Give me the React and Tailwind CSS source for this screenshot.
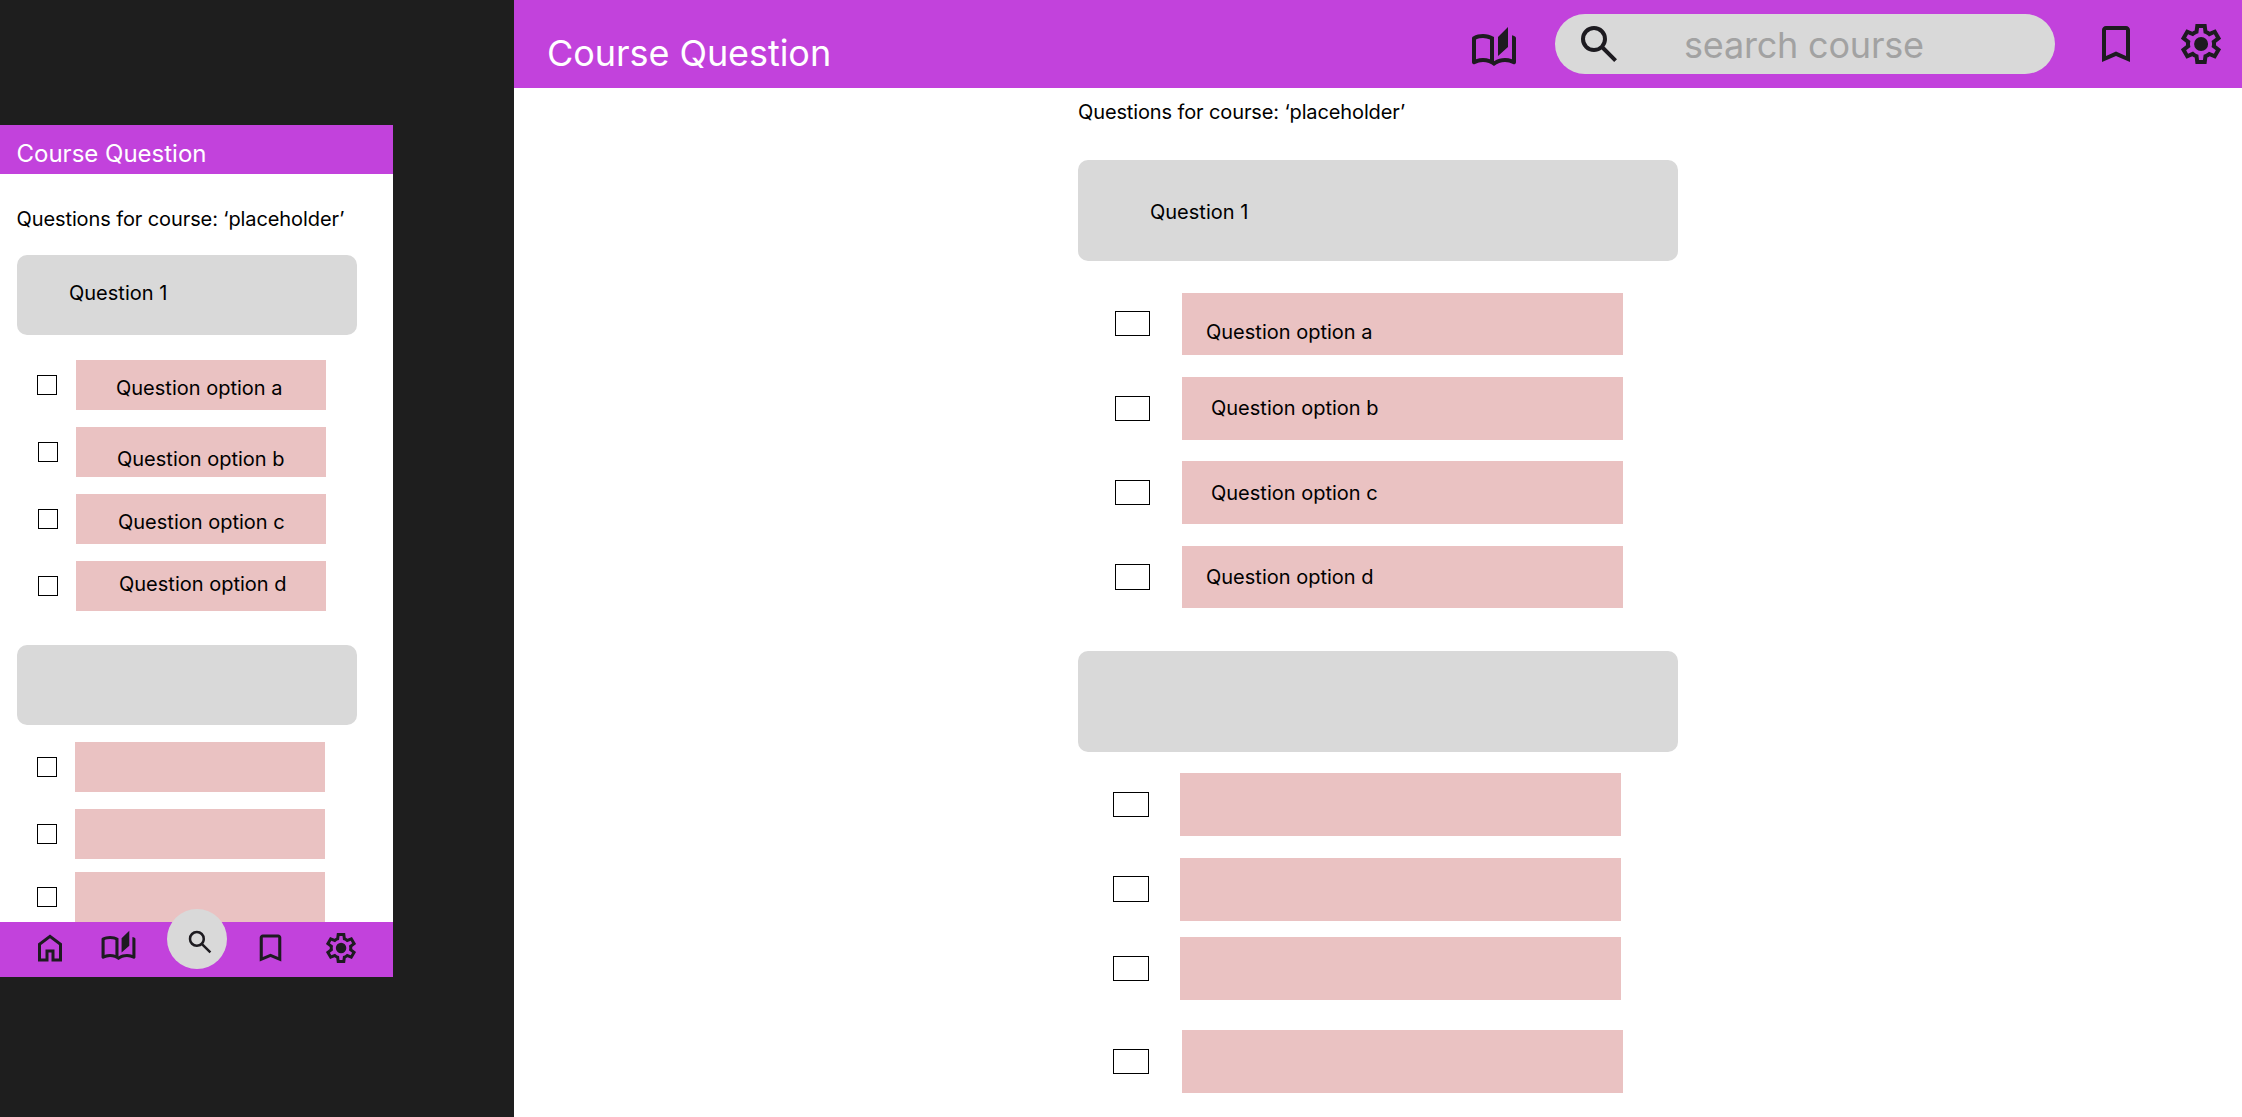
const ICONS = {
  home: 'M240-200h120v-240h240v240h120v-360L480-740 240-560v360Zm-80 80v-480l320-240 320 240v480H520v-240h-80v240H160Z',
  book: 'M480-160q-48-38-104-59t-116-21q-42 0-82.5 11T100-198q-21 11-40.5-1T40-234v-482q0-11 5.5-21T62-752q46-24 96-36t102-12q58 0 113.5 15T480-740v484q51-32 107-48t113-16q36 0 70.5 6t69.5 18v-480q15 5 29.5 10.5T898-752q11 5 16.5 15t5.5 21v482q0 23-19.5 35t-40.5 1q-37-20-77.5-31T700-240q-60 0-116 21t-104 59Zm80-200v-380l200-200v400L560-360Zm-160 65v-396q-33-14-68.5-21.5T260-720q-37 0-72 7t-68 21v397q35-13 69.5-19t70.5-6q36 0 70.5 6t69.5 19Z',
  search: 'M784-120 532-372q-30 24-69 38t-83 14q-109 0-184.5-75.5T120-580q0-109 75.5-184.5T380-840q109 0 184.5 75.5T640-580q0 44-14 83t-38 69l252 252-56 56ZM380-400q75 0 127.5-52.5T560-580q0-75-52.5-127.5T380-760q-75 0-127.5 52.5T200-580q0 75 52.5 127.5T380-400Z',
  bookmark: 'M200-120v-640q0-33 23.5-56.5T280-840h400q33 0 56.5 23.5T760-760v640L480-240 200-120Zm80-122 200-86 200 86v-518H280v518Z',
  settings: 'm370-80-16-128q-13-5-24.5-12T307-235l-119 50L78-375l103-78q-1-7-1-13.5v-27q0-6.5 1-13.5L78-585l110-190 119 50q11-8 23-15t24-12l16-128h220l16 128q13 5 24.5 12t22.5 15l119-50 110 190-103 78q1 7 1 13.5v27q0 6.5-2 13.5l103 78-110 190-118-50q-11 8-23 15t-24 12L590-80H370Zm70-80h79l14-106q31-8 57.5-23.5T639-327l99 41 39-68-86-65q5-14 7-29.5t2-31.5q0-16-2-31.5t-7-29.5l86-65-39-68-99 42q-22-23-48.5-38.5T533-694l-13-106h-79l-14 106q-31 8-57.5 23.5T321-633l-99-41-39 68 86 64q-5 15-7 30t-2 32q0 16 2 31t7 30l-86 65 39 68 99-42q22 23 48.5 38.5T427-266l13 106Zm42-180q58 0 99-41t41-99q0-58-41-99t-99-41q-59 0-99.5 41T342-480q0 58 40.5 99t99.5 41Z',
};

function Icon({ name, className }) {
  return (
    <svg viewBox="0 -960 960 960" preserveAspectRatio="none" fill="currentColor" className={`shrink-0 text-[#1d1b20] ${className}`}>
      <path d={ICONS[name]} />
    </svg>
  );
}

function Prompt({ className, children }) {
  return <div className={`rounded-[10px] bg-[#d9d9d9] ${className}`}>{children}</div>;
}

function Option({ row, check, box, label }) {
  return (
    <div className={`flex items-start ${row}`}>
      <div className={`shrink-0 border border-black ${check}`} />
      <div className={`shrink-0 bg-[#eac2c2] ${box}`}>{label}</div>
    </div>
  );
}

const PHONE_FIRST = [
  { row: 'mt-[25px] pl-[37px]', check: 'mt-[15px] size-5', box: 'ml-[19px] h-[50px] w-[250px] pl-[40px] pt-[16px]', label: 'Question option a' },
  { row: 'mt-[17px] pl-[38px]', check: 'mt-[15px] size-5', box: 'ml-[18px] h-[50px] w-[250px] pl-[41px] pt-[20px]', label: 'Question option b' },
  { row: 'mt-[17px] pl-[38px]', check: 'mt-[15px] size-5', box: 'ml-[18px] h-[50px] w-[250px] pl-[42px] pt-[16px]', label: 'Question option c' },
  { row: 'mt-[17px] pl-[38px]', check: 'mt-[15px] size-5', box: 'ml-[18px] h-[50px] w-[250px] pl-[43px] pt-[11px]', label: 'Question option d' },
];

const PHONE_SECOND = [
  { row: 'mt-[17px] pl-[37px]', check: 'mt-[15px] size-5', box: 'ml-[18px] h-[50px] w-[250px]' },
  { row: 'mt-[17px] pl-[37px]', check: 'mt-[15px] size-5', box: 'ml-[18px] h-[50px] w-[250px]' },
  { row: 'mt-[13px] pl-[37px]', check: 'mt-[15px] size-5', box: 'ml-[18px] h-[50px] w-[250px]' },
];

const DESKTOP_FIRST = [
  { row: 'mt-[32px] pl-[37px]', check: 'mt-[18px] h-[25px] w-[35px]', box: 'ml-[32px] h-[62px] w-[441px] pl-[24px] pt-[27px]', label: 'Question option a' },
  { row: 'mt-[22px] pl-[37px]', check: 'mt-[19px] h-[25px] w-[35px]', box: 'ml-[32px] h-[63px] w-[441px] pl-[29px] pt-[19px]', label: 'Question option b' },
  { row: 'mt-[21px] pl-[37px]', check: 'mt-[19px] h-[25px] w-[35px]', box: 'ml-[32px] h-[63px] w-[441px] pl-[29px] pt-[20px]', label: 'Question option c' },
  { row: 'mt-[22px] pl-[37px]', check: 'mt-[18px] h-[26px] w-[35px]', box: 'ml-[32px] h-[62px] w-[441px] pl-[24px] pt-[19px]', label: 'Question option d' },
];

const DESKTOP_SECOND = [
  { row: 'mt-[21px] pl-[35px]', check: 'mt-[19px] h-[25px] w-[36px]', box: 'ml-[31px] h-[63px] w-[441px]' },
  { row: 'mt-[22px] pl-[35px]', check: 'mt-[18px] h-[26px] w-[36px]', box: 'ml-[31px] h-[63px] w-[441px]' },
  { row: 'mt-[16px] pl-[35px]', check: 'mt-[19px] h-[25px] w-[36px]', box: 'ml-[31px] h-[63px] w-[441px]' },
  { row: 'mt-[30px] pl-[35px]', check: 'mt-[19px] h-[25px] w-[36px]', box: 'ml-[33px] h-[63px] w-[441px]' },
];

function Phone() {
  return (
    <section className="flex h-[852px] w-[393px] flex-col bg-white">
      <header className="h-[49px] shrink-0 bg-[#c242dc] pl-[16.5px] pt-[14px] text-[24px] leading-[29px] text-white">Course Question</header>
      <main className="min-h-0 flex-1 overflow-hidden pt-[33px]">
        <p className="pl-[16.5px] tracking-[-0.1px]">Questions for course: ‘placeholder’</p>
        <Prompt className="ml-[17px] mt-[24px] h-20 w-[340px] pl-[52px] pt-[26px]">Question 1</Prompt>
        {PHONE_FIRST.map((o, i) => <Option key={i} {...o} />)}
        <Prompt className="ml-[17px] mt-[34px] h-20 w-[340px]" />
        {PHONE_SECOND.map((o, i) => <Option key={i} {...o} />)}
      </main>
      <nav className="flex h-[55px] shrink-0 items-start bg-[#c242dc] pl-8">
        <Icon name="home" className="mt-2 size-9" />
        <Icon name="book" className="ml-[31.5px] mt-2 h-9 w-[37px]" />
        <div className="-mt-[13px] ml-[30.5px] size-[60px] shrink-0 rounded-full bg-[#d9d9d9] pl-[18px] pt-[18px]">
          <Icon name="search" className="size-[30px]" />
        </div>
        <Icon name="bookmark" className="ml-[24.5px] mt-2 h-9 w-[37px]" />
        <Icon name="settings" className="ml-[34.5px] mt-2 size-9" />
      </nav>
    </section>
  );
}

function Desktop() {
  return (
    <section className="flex h-full w-[1728px] flex-col bg-white">
      <header className="flex h-[88px] shrink-0 items-start bg-[#c242dc] pl-[33px] text-[36px] leading-[44px]">
        <h1 className="mt-[31px] w-[923px] tracking-[-0.06px] text-white">Course Question</h1>
        <Icon name="book" className="mt-[26px] size-12" />
        <div className="ml-[37px] mt-[14px] flex h-[60px] w-[500px] shrink-0 items-start rounded-[30px] bg-[#d9d9d9] pl-5">
          <Icon name="search" className="mt-[6px] size-12" />
          <span className="ml-[61px] mt-[9px] tracking-[-0.2px] text-[#a2a2a2]">search course</span>
        </div>
        <Icon name="bookmark" className="ml-[37px] mt-5 size-12" />
        <Icon name="settings" className="ml-[37px] mt-5 size-12" />
      </header>
      <main className="ml-[564px] w-[600px] pt-3">
        <p className="tracking-[-0.12px]">Questions for course: ‘placeholder’</p>
        <Prompt className="mt-[36px] h-[101px] pl-[72px] pt-[40px]">Question 1</Prompt>
        {DESKTOP_FIRST.map((o, i) => <Option key={i} {...o} />)}
        <Prompt className="mt-[43px] h-[101px]" />
        {DESKTOP_SECOND.map((o, i) => <Option key={i} {...o} />)}
      </main>
    </section>
  );
}

export default function App() {
  return (
    <div className="flex h-[1117px] w-[2242px] overflow-hidden bg-[#1e1e1e] font-['Inter',sans-serif] text-[20px] leading-6 text-black">
      <aside className="w-[514px] shrink-0 pt-[125px]">
        <Phone />
      </aside>
      <Desktop />
    </div>
  );
}
